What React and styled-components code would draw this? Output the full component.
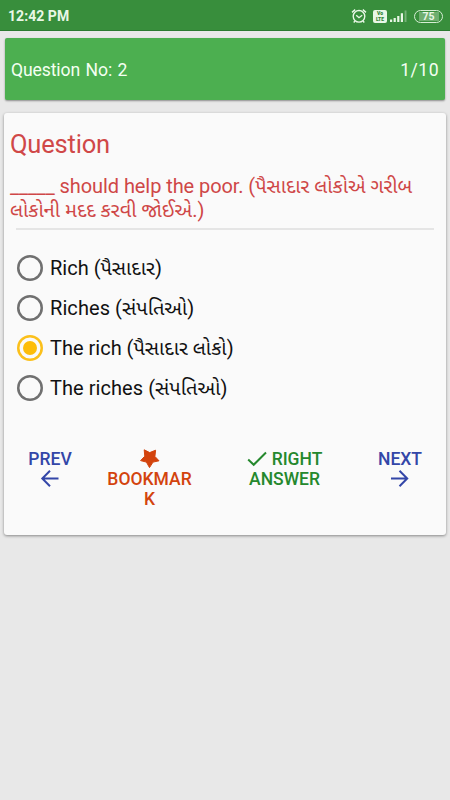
import React from 'react';
import styled, { createGlobalStyle } from 'styled-components';

const GlobalStyle = createGlobalStyle`
  * { box-sizing: border-box; }
  body { margin: 0; background: #e8e8e8; font-family: Roboto, "Noto Sans Gujarati", "Noto Sans", sans-serif; }
`;

const Screen = styled.main`
  display: flex;
  flex-direction: column;
  height: 800px;
  width: 450px;
  background: #e8e8e8;
  overflow: hidden;
`;

const StatusBar = styled.header`
  display: flex;
  align-items: center;
  flex: none;
  height: 31px;
  padding: 2px 7px 0 8px;
  background: #388e3c;
  border-bottom: 1px solid #2b7a30;
  color: #e9f7e6;
`;

const Clock = styled.time`
  flex: 1;
  font-size: 14px;
  font-weight: 700;
  letter-spacing: 0.05px;
`;

const StatusIcon = styled.svg`
  display: block;
  flex: none;
  width: ${(p) => p.$w}px;
  height: ${(p) => p.$h}px;
  margin-left: ${(p) => p.$gap || 0}px;
`;

const VolteBadge = styled.span`
  display: grid;
  place-content: center;
  width: 14px;
  height: 13px;
  margin-left: 6px;
  border-radius: 2px;
  background: #e9f7e6;
  color: #2f8334;
  font-size: 5px;
  font-weight: 900;
  line-height: 6px;
  text-align: center;
`;

const Battery = styled.span`
  display: grid;
  place-items: center;
  width: 29px;
  height: 13px;
  margin-left: 6px;
  border: 1px solid #d6edd4;
  border-radius: 7px;
  background: linear-gradient(#6fae70, #6fae70) center / 20px 9px no-repeat;
  font-size: 10.5px;
  font-weight: 700;
  line-height: 11px;
`;

const Counter = styled.section`
  display: flex;
  justify-content: space-between;
  align-items: center;
  flex: none;
  height: 62px;
  margin: 7px 5px 0;
  padding: 2px 6px 0 6px;
  border-radius: 2px;
  background: #4caf50;
  box-shadow: 0 1px 2px rgba(0, 0, 0, 0.4);
  color: #f4fff2;
  font-size: 17.6px;
`;

const CounterText = styled.span`
  letter-spacing: ${(p) => p.$spacing}px;
  word-spacing: ${(p) => p.$word || 0}px;
`;

const QuestionCard = styled.section`
  flex: none;
  height: 422px;
  margin: 13px 4px 0 4px;
  border-radius: 3px;
  background: #fafafa;
  box-shadow: 0 1px 3px rgba(0, 0, 0, 0.42);
`;

const Title = styled.h1`
  margin: 0;
  padding: 16px 6px 0;
  color: #d04848;
  font-size: 25.5px;
  font-weight: 400;
  line-height: 30px;
  letter-spacing: -0.2px;
`;

const Prompt = styled.p`
  margin: 0 12px 0 6px;
  padding-top: 15px;
  height: 69px;
  color: #cf4747;
  font-size: 20px;
  line-height: 24px;
  white-space: nowrap;
`;

const Line = styled.span`
  display: block;
`;

const Run = styled.span`
  letter-spacing: ${(p) => p.$spacing || 0}px;
`;

const Divider = styled.hr`
  margin: 0 12px;
  border: 0;
  height: 2px;
  background: #e5e5e5;
`;

const Options = styled.div`
  display: flex;
  flex-direction: column;
  padding: 18px 13px 0;
`;

const Option = styled.label`
  display: flex;
  align-items: center;
  height: 40px;
  color: #111;
  font-size: 20px;
  white-space: nowrap;
`;

const OptionText = styled.span`
  padding-top: 2px;
`;

const Radio = styled.span`
  display: grid;
  place-items: center;
  flex: none;
  width: 26px;
  height: 26px;
  margin-right: 7px;
  border-radius: 50%;
  box-shadow: inset 0 0 0 2.5px ${(p) => (p.$on ? '#fbc01b' : '#707070')};
  &::after {
    content: '';
    width: 14px;
    height: 14px;
    border-radius: 50%;
    background: ${(p) => (p.$on ? '#fdbd09' : 'transparent')};
  }
`;

const Actions = styled.nav`
  display: grid;
  grid-template-columns: 92px 107px 163px 68px;
  padding-top: 40.5px;
`;

const Action = styled.button`
  display: flex;
  flex-direction: column;
  align-items: center;
  padding: 0;
  border: 0;
  background: none;
  color: ${(p) => p.$color};
  font: 500 17.5px/20.4px Roboto, sans-serif;
`;

const ActionRow = styled.span`
  display: flex;
  justify-content: center;
  align-items: center;
  height: 20.4px;
  gap: 5px;
`;

const Glyph = styled.svg`
  display: block;
  width: 20px;
  height: 20px;
  fill: none;
  stroke: currentColor;
  stroke-width: 2;
`;

const options = [
  { latin: 'Rich (', gujarati: 'પૈસાદાર', tail: ')' },
  { latin: 'Riches (', gujarati: 'સંપતિઓ', tail: ')', spacing: 0.08 },
  { latin: 'The rich (', gujarati: 'પૈસાદાર લોકો', tail: ')', on: true },
  { latin: 'The riches (', gujarati: 'સંપતિઓ', tail: ')', spacing: 0.06 },
];

const AlarmIcon = () => (
  <StatusIcon $w={16} $h={16} viewBox="0 0 16 16" fill="none" stroke="#e9f7e6" strokeWidth="1.4">
    <circle cx="8" cy="8.3" r="5.8" />
    <path d="M1 4.4 4.2 1.6M15 4.4 11.8 1.6M5.2 7.2 8 9.7l3.2-2.5M4 13l-1.3 1.5M12 13l1.3 1.5" />
  </StatusIcon>
);

const SignalIcon = () => (
  <StatusIcon $w={18} $h={13} $gap={3} viewBox="0 0 18 13" fill="#e9f7e6">
    <path d="M0 9.5h2.2V12H0zM3.6 8h2.2v4H3.6zM7.2 6h2.2v6H7.2zM10.8 3.3H13V12h-2.2z" />
    <path d="M14.6 .5h1.9V12h-1.9z" opacity="0.35" />
  </StatusIcon>
);

export default function App() {
  return (
    <>
      <GlobalStyle />
      <Screen>
        <StatusBar>
          <Clock>12:42 PM</Clock>
          <AlarmIcon />
          <VolteBadge><span>Vo</span><span>LTE</span></VolteBadge>
          <SignalIcon />
          <Battery>75</Battery>
        </StatusBar>
        <Counter>
          <CounterText $spacing={-0.12} $word={1.3}>Question No: 2</CounterText>
          <CounterText $spacing={0.45}>1/10</CounterText>
        </Counter>
        <QuestionCard>
          <Title>Question</Title>
          <Prompt>
            <Line><Run $spacing={-0.08}>_____ should help the poor. (</Run><Run $spacing={-0.06}>પૈસાદાર લોકોએ ગરીબ</Run></Line>
            <Line>લોકોની મદદ કરવી જોઈએ.)</Line>
          </Prompt>
          <Divider />
          <Options>
            {options.map((o) => (
              <Option key={o.latin}>
                <Radio $on={o.on} />
                <OptionText><Run $spacing={o.spacing}>{o.latin}</Run><Run>{o.gujarati}</Run><Run>{o.tail}</Run></OptionText>
              </Option>
            ))}
          </Options>
          <Actions>
            <Action $color="#3346a8">
              <ActionRow>PREV</ActionRow>
              <ActionRow><Glyph viewBox="0 0 20 20"><path d="M18.5 9.5H2.5M10 1.8 2.3 9.5l7.7 7.7" /></Glyph></ActionRow>
            </Action>
            <Action $color="#d3430d">
              <ActionRow>
                <Glyph viewBox="0 0 20 20"><path fill="currentColor" strokeWidth="1" strokeLinejoin="round" d="M4.2 .8 9.7 3.6 15.6 1.2 14.9 7.4 19 11.8 13 13.1 9.5 18.6 6.4 13.1.6 11.6 4.8 7.2z" /></Glyph>
              </ActionRow>
              <ActionRow>BOOKMAR</ActionRow>
              <ActionRow>K</ActionRow>
            </Action>
            <Action $color="#25882d">
              <ActionRow><Glyph viewBox="0 0 20 20"><path d="m1.2 10.5 5.5 5.3L19 3.5" /></Glyph>RIGHT</ActionRow>
              <ActionRow>ANSWER</ActionRow>
            </Action>
            <Action $color="#3346a8">
              <ActionRow>NEXT</ActionRow>
              <ActionRow><Glyph viewBox="0 0 20 20"><path d="M1 9.5h16M9.5 1.8l7.7 7.7-7.7 7.7" /></Glyph></ActionRow>
            </Action>
          </Actions>
        </QuestionCard>
      </Screen>
    </>
  );
}
